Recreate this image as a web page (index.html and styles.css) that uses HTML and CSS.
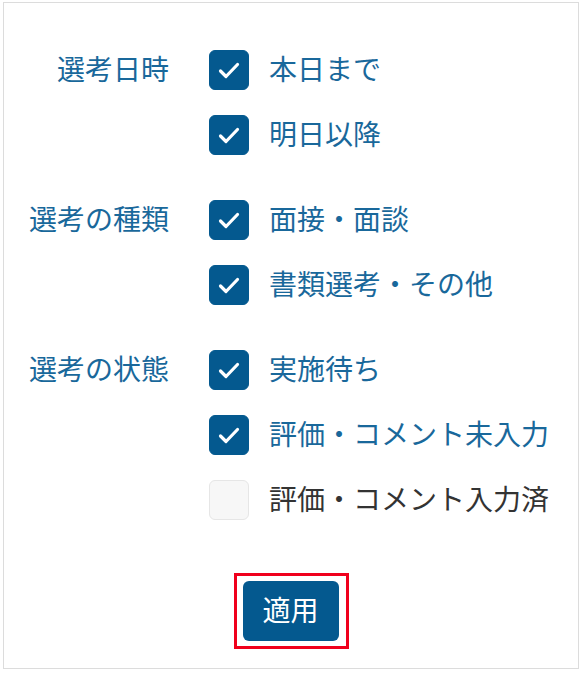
FILE: index.html
```html
<!DOCTYPE html>
<html lang="ja">
<head>
<meta charset="utf-8">
<title>選考フィルター</title>
<link rel="stylesheet" href="styles.css">
</head>
<body>
<div class="panel">
  <div class="groups">
    <div class="group">
      <div class="group-label">選考日時</div>
      <div class="options">
        <label class="option is-checked"><span class="box"><svg viewBox="0 0 40 40"><polyline points="11.5,21 17,26.5 28.5,14.5"/></svg></span><span class="text">本日まで</span></label>
        <label class="option is-checked"><span class="box"><svg viewBox="0 0 40 40"><polyline points="11.5,21 17,26.5 28.5,14.5"/></svg></span><span class="text">明日以降</span></label>
      </div>
    </div>
    <div class="group">
      <div class="group-label">選考の種類</div>
      <div class="options">
        <label class="option is-checked"><span class="box"><svg viewBox="0 0 40 40"><polyline points="11.5,21 17,26.5 28.5,14.5"/></svg></span><span class="text">面接・面談</span></label>
        <label class="option is-checked"><span class="box"><svg viewBox="0 0 40 40"><polyline points="11.5,21 17,26.5 28.5,14.5"/></svg></span><span class="text">書類選考・その他</span></label>
      </div>
    </div>
    <div class="group">
      <div class="group-label">選考の状態</div>
      <div class="options">
        <label class="option is-checked"><span class="box"><svg viewBox="0 0 40 40"><polyline points="11.5,21 17,26.5 28.5,14.5"/></svg></span><span class="text">実施待ち</span></label>
        <label class="option is-checked"><span class="box"><svg viewBox="0 0 40 40"><polyline points="11.5,21 17,26.5 28.5,14.5"/></svg></span><span class="text">評価・コメント未入力</span></label>
        <label class="option"><span class="box"></span><span class="text">評価・コメント入力済</span></label>
      </div>
    </div>
  </div>
  <div class="actions">
    <div class="highlight"><button class="apply" type="button">適用</button></div>
  </div>
</div>
</body>
</html>
```

FILE: styles.css
```css
html, body {
  margin: 0;
  padding: 0;
  background: #ffffff;
}

body {
  font-family: "Noto Sans CJK JP", "Noto Sans", sans-serif;
}

.panel {
  box-sizing: border-box;
  width: 576px;
  height: 667px;
  margin: 2px 0 0 3px;
  border: 1px solid #dcdcdc;
  padding-top: 47px;
}

.groups {
  display: flex;
  flex-direction: column;
  gap: 45px;
}

.group {
  display: flex;
  align-items: flex-start;
}

.group-label {
  width: 165px;
  margin-right: 40px;
  text-align: right;
  font-size: 28px;
  line-height: 36px;
  padding-bottom: 4px;
  color: #19689b;
  white-space: nowrap;
}

.options {
  display: flex;
  flex-direction: column;
  gap: 25px;
}

.option {
  display: flex;
  align-items: center;
  height: 40px;
  gap: 20px;
}

.box {
  box-sizing: border-box;
  width: 40px;
  height: 40px;
  border-radius: 6px;
  background: #f7f7f7;
  border: 1px solid #e6e6e6;
  display: flex;
}

.box svg {
  width: 40px;
  height: 40px;
  margin: -1px;
}

.box polyline {
  fill: none;
  stroke: #ffffff;
  stroke-width: 3.2;
  stroke-linecap: round;
  stroke-linejoin: round;
}

.is-checked .box {
  background: #04598f;
  border-color: #04598f;
}

.text {
  font-size: 28px;
  line-height: 36px;
  padding-bottom: 4px;
  color: #333333;
  white-space: nowrap;
}

.is-checked .text {
  color: #19689b;
}

.actions {
  display: flex;
  justify-content: center;
  margin-top: 53px;
}

.highlight {
  box-sizing: border-box;
  width: 115px;
  height: 76px;
  border: 3px solid #f0001c;
  padding: 5px 0 0 6px;
}

.apply {
  width: 96px;
  height: 60px;
  border: none;
  border-radius: 6px;
  background: #04598f;
  color: #ffffff;
  font-family: "Noto Sans CJK JP", "Noto Sans", sans-serif;
  font-size: 28px;
  line-height: 36px;
  padding: 0 0 5px 0;
  display: block;
}
```
